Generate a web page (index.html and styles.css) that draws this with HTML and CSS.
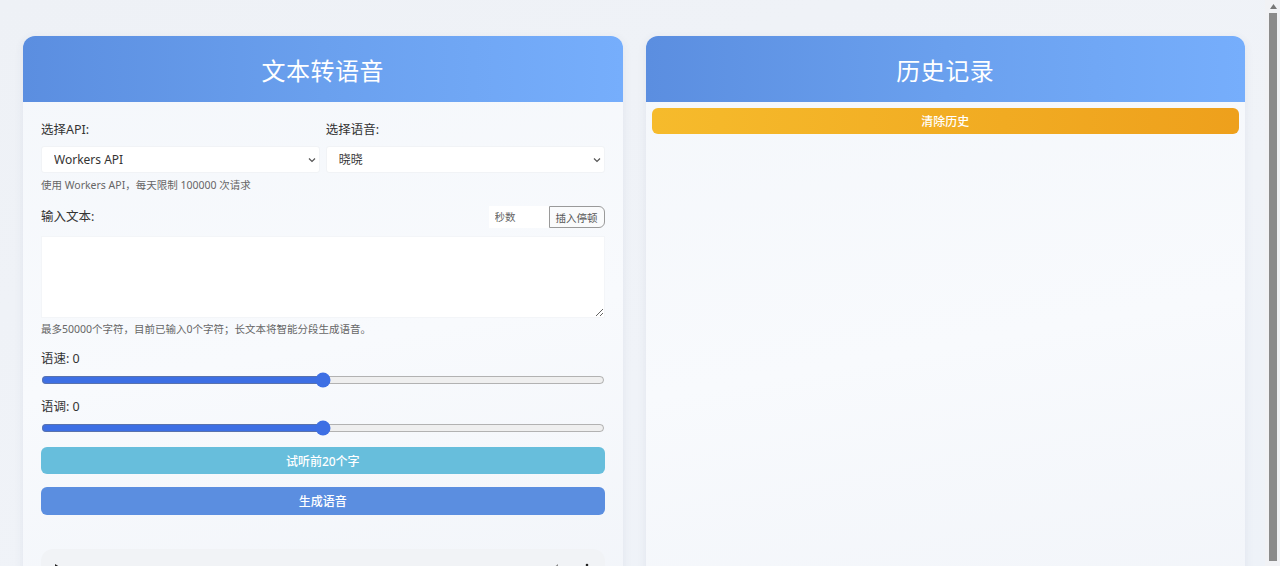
FILE: index.html
```html
<!DOCTYPE html>
<html lang="zh">
<head>
<meta charset="utf-8">
<title>文本转语音</title>
<link rel="stylesheet" href="styles.css">
</head>
<body>
<div class="page">
<main class="wrap">
  <section class="card">
    <div class="card-head"><h1>文本转语音</h1></div>
    <div class="card-body">
      <div class="two">
        <div class="field">
          <label class="lbl">选择API:</label>
          <div class="sel-wrap">
            <select class="sel"><option>Workers API</option></select>
            <svg class="chev" width="8" height="6" viewBox="0 0 8 6"><path d="M1 1.5 L4 4.5 L7 1.5" fill="none" stroke="#555" stroke-width="1.2"/></svg>
          </div>
        </div>
        <div class="field">
          <label class="lbl">选择语音:</label>
          <div class="sel-wrap">
            <select class="sel"><option>晓晓</option></select>
            <svg class="chev" width="8" height="6" viewBox="0 0 8 6"><path d="M1 1.5 L4 4.5 L7 1.5" fill="none" stroke="#555" stroke-width="1.2"/></svg>
          </div>
        </div>
      </div>
      <div class="hint hint-api">使用 Workers API，每天限制 100000 次请求</div>
      <div class="text-row">
        <label class="lbl">输入文本:</label>
        <div class="pause">
          <input class="sec" type="text" placeholder="秒数">
          <button class="pause-btn">插入停顿</button>
        </div>
      </div>
      <textarea class="ta"></textarea>
      <div class="hint hint-ta">最多50000个字符，目前已输入0个字符；长文本将智能分段生成语音。</div>
      <label class="lbl lbl-range">语速: 0</label>
      <input class="range" type="range" min="-100" max="100" value="0">
      <label class="lbl lbl-range2">语调: 0</label>
      <input class="range" type="range" min="-100" max="100" value="0">
      <button class="btn btn-preview">试听前20个字</button>
      <button class="btn btn-gen">生成语音</button>
      <div class="player">
        <svg class="play" width="8" height="10" viewBox="0 0 8 10"><path d="M0 0 L8 5 L0 10 Z" fill="#222"/></svg>
        <span class="time">0:00 / 0:00</span>
        <svg class="vol" width="12" height="12" viewBox="0 0 12 12"><path d="M1 4 H3.5 L7 1 V11 L3.5 8 H1 Z" fill="#888"/><path d="M8.5 4 Q10 6 8.5 8" fill="none" stroke="#888" stroke-width="1"/></svg>
        <svg class="dots" width="4" height="12" viewBox="0 0 4 12"><circle cx="2" cy="2" r="1.3" fill="#222"/><circle cx="2" cy="6" r="1.3" fill="#222"/><circle cx="2" cy="10" r="1.3" fill="#222"/></svg>
      </div>
    </div>
  </section>
  <section class="card">
    <div class="card-head"><h1>历史记录</h1></div>
    <div class="card-body card-body-hist">
      <button class="btn btn-clear">清除历史</button>
    </div>
  </section>
</main>
<div class="vscroll">
  <svg class="vscroll-up" width="7" height="5" viewBox="0 0 7 5"><path d="M0 5 L3.5 0 L7 5 Z" fill="#777"/></svg>
  <div class="vscroll-thumb"></div>
</div>
</div>
</body>
</html>
```
FILE: styles.css
```css
html, body {
  margin: 0;
  padding: 0;
  height: 100%;
  overflow: hidden;
}
body {
  background: linear-gradient(160deg, #eef1f6 0%, #f0f3f8 60%, #eef2f8 100%);
  font-family: "Noto Sans", "Noto Sans CJK SC", sans-serif;
  color: #333;
}
.page {
  display: flex;
  height: 100vh;
}
.wrap {
  flex: 1;
  min-width: 0;
  display: flex;
  align-items: flex-start;
  gap: 23px;
  padding: 36px 20px 0 23px;
}
.vscroll {
  width: 15px;
  flex: none;
  background: #f1f2f5;
  display: flex;
  flex-direction: column;
  align-items: center;
  padding-top: 4px;
  box-sizing: border-box;
}
.vscroll-up {
  margin-left: 1px;
}
.vscroll-thumb {
  margin-top: 4px;
  margin-left: 1px;
  width: 8px;
  height: 548px;
  background: #8b8b8b;
}
.card {
  flex: 1;
  min-width: 0;
  height: 620px;
  border-radius: 12px 12px 0 0;
  background: linear-gradient(170deg, #f4f7fb 0%, #f8fafd 50%, #f1f4f9 100%);
  box-shadow: 0 2px 10px rgba(60, 80, 120, 0.08);
  display: flex;
  flex-direction: column;
}
.card-head {
  height: 66px;
  flex: none;
  border-radius: 12px 12px 0 0;
  background: linear-gradient(90deg, #5b8ee0 0%, #6aa0ee 50%, #76aefc 100%);
  display: flex;
  align-items: center;
  justify-content: center;
}
.card-head h1 {
  margin: 0;
  color: #fff;
  font-weight: 400;
  font-size: 24px;
  letter-spacing: 0.5px;
}
.card-body {
  padding: 19px 18px 30px 18px;
  display: flex;
  flex-direction: column;
}
.two {
  display: grid;
  grid-template-columns: 1fr 1fr;
  gap: 6px;
}
.field {
  display: flex;
  flex-direction: column;
}
.lbl {
  font-size: 12.5px;
  line-height: 18px;
  color: #333;
}
.sel-wrap {
  position: relative;
  margin-top: 7px;
  display: flex;
}
.sel {
  flex: 1;
  height: 27px;
  appearance: none;
  -webkit-appearance: none;
  border: 1px solid #f1f3f6;
  border-radius: 3px;
  background: #fff;
  font-family: "Noto Sans", "Noto Sans CJK SC", sans-serif;
  font-size: 12px;
  color: #333;
  padding: 0 12px;
}
.chev {
  position: absolute;
  right: 4px;
  top: 11px;
  pointer-events: none;
}
.hint {
  font-size: 10.5px;
  line-height: 16px;
  color: #666;
}
.hint-api { margin-top: 4px; }
.text-row {
  margin-top: 13px;
  display: flex;
  align-items: center;
  justify-content: space-between;
  height: 22px;
}
.pause {
  display: flex;
  height: 22px;
}
.sec {
  width: 60px;
  box-sizing: border-box;
  border: none;
  background: #fff;
  font-size: 10.5px;
  padding: 0 6px;
  font-family: "Noto Sans", "Noto Sans CJK SC", sans-serif;
  outline: none;
}
.sec::placeholder { color: #666; }
.pause-btn {
  width: 56px;
  border: 1px solid #9a9a9a;
  border-radius: 0 6px 6px 0;
  background: #fafbfc;
  font-size: 10.5px;
  color: #555;
  padding: 0;
  font-family: "Noto Sans", "Noto Sans CJK SC", sans-serif;
}
.ta {
  margin-top: 8px;
  height: 82px;
  box-sizing: border-box;
  border: 1px solid #f3f5f8;
  background: #fff;
  resize: vertical;
}
.hint-ta { margin-top: 3px; }
.lbl-range { margin-top: 13px; }
.lbl-range2 { margin-top: 10px; }
.range {
  margin: 4px 0 0 0;
  width: 100%;
  height: 16px;
  accent-color: #3d6fe4;
}
.btn {
  border: none;
  border-radius: 6px;
  color: #fff;
  font-family: "Noto Sans", "Noto Sans CJK SC", sans-serif;
  font-size: 12px;
  font-weight: 500;
  padding: 0;
}
.btn-preview {
  margin-top: 11px;
  height: 27px;
  background: #67bedc;
}
.btn-gen {
  margin-top: 13px;
  height: 28px;
  background: #5b8ee0;
}
.player {
  margin-top: 34px;
  height: 40px;
  border-radius: 12px;
  background: #f1f3f6;
  display: flex;
  align-items: center;
  gap: 12px;
  padding: 0 16px 0 14px;
  font-size: 11px;
  color: #222;
}
.vol { margin-left: auto; }
.dots { margin-left: 10px; }
.card-body-hist {
  padding: 6px 6px 0 6px;
}
.btn-clear {
  height: 26px;
  background: linear-gradient(90deg, #f6bb2c 0%, #f1ab22 60%, #eea01c 100%);
}
```
